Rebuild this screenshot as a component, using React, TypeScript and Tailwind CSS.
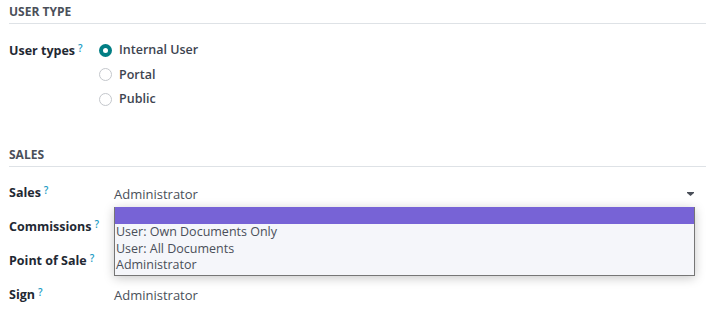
import React from "react";

const font = { fontFamily: '"Open Sans", "Noto Sans", sans-serif' };

function Help() {
  return <sup className="relative top-[-3px] ml-[3px] text-[10px] font-semibold text-[#1c9bc4]">?</sup>;
}

function Radio({ checked, label }: { checked?: boolean; label: string }) {
  return (
    <div className="flex h-[24.3px] items-center">
      {checked ? (
        <span className="box-border flex h-[13px] w-[13px] items-center justify-center rounded-full bg-[#017e84]">
          <span className="h-[5px] w-[5px] rounded-full bg-white" />
        </span>
      ) : (
        <span className="box-border h-[13px] w-[13px] rounded-full border border-[#c4c7cc] bg-white" />
      )}
      <span className="ml-[7px] text-[12.5px] font-semibold text-[#3d4450]">{label}</span>
    </div>
  );
}

function Header({ title }: { title: string }) {
  return (
    <div className="box-border h-[24px] border-b border-[#dee2e6] pt-[5px] text-[12px] leading-[14px] font-bold text-[#4a4f59]">
      {title}
    </div>
  );
}

const labelCls = "w-[105px] pt-[1px] text-[12.5px] leading-[20px] font-bold text-[#1f2933]";

export default function App() {
  return (
    <div style={font} className="relative h-[324px] w-[706px] overflow-hidden bg-white pl-[9px]">
      <Header title="USER TYPE" />
      <div className="mt-[14.5px] flex">
        <div className="w-[90px] pt-[2px] text-[12.5px] leading-[20px] font-bold text-[#1f2933]">
          User types
          <Help />
        </div>
        <div className="flex flex-col">
          <Radio checked label="Internal User" />
          <Radio label="Portal" />
          <Radio label="Public" />
        </div>
      </div>
      <div className="mt-[32px]">
        <Header title="SALES" />
      </div>
      <div className="mt-[15px] flex flex-col">
        <div className="flex h-[34px] items-start">
          <div className={labelCls}>
            Sales
            <Help />
          </div>
          <div className="mr-[11px] box-border flex h-[26px] flex-1 items-start justify-between border-b border-[#017e84] pt-[2px] text-[13px] leading-[20px] text-[#4a4f59]">
            <span>Administrator</span>
            <svg width="7" height="4" viewBox="0 0 7 4" className="mr-[1px] mt-[8px]">
              <path d="M0 0 H7 V1 L3.5 4 L0 1 Z" fill="#4a4f59" />
            </svg>
          </div>
        </div>
        <div className="flex h-[34px] items-start">
          <div className={labelCls}>
            Commissions
            <Help />
          </div>
        </div>
        <div className="flex h-[34px] items-start">
          <div className={labelCls}>
            Point of Sale
            <Help />
          </div>
        </div>
        <div className="flex h-[34px] items-start">
          <div className={labelCls}>
            Sign
            <Help />
          </div>
          <div className="pt-[1px] text-[13px] leading-[20px] text-[#4a4f59]">Administrator</div>
        </div>
      </div>
      <div className="absolute left-[114px] top-[207px] box-border w-[581px] border-x border-b border-[#767676] bg-[#f5f6fa] pb-[1px] text-[12.5px] text-[#4a4f59] shadow-[0_2px_10px_rgba(0,0,0,0.22)]">
        <div className="h-[17px] bg-[#7763d6]" />
        <div className="h-[16.5px] pl-[1px] leading-[16.5px]">User: Own Documents Only</div>
        <div className="h-[16.5px] pl-[1px] leading-[16.5px]">User: All Documents</div>
        <div className="h-[16.5px] pl-[1px] leading-[16.5px]">Administrator</div>
      </div>
    </div>
  );
}
